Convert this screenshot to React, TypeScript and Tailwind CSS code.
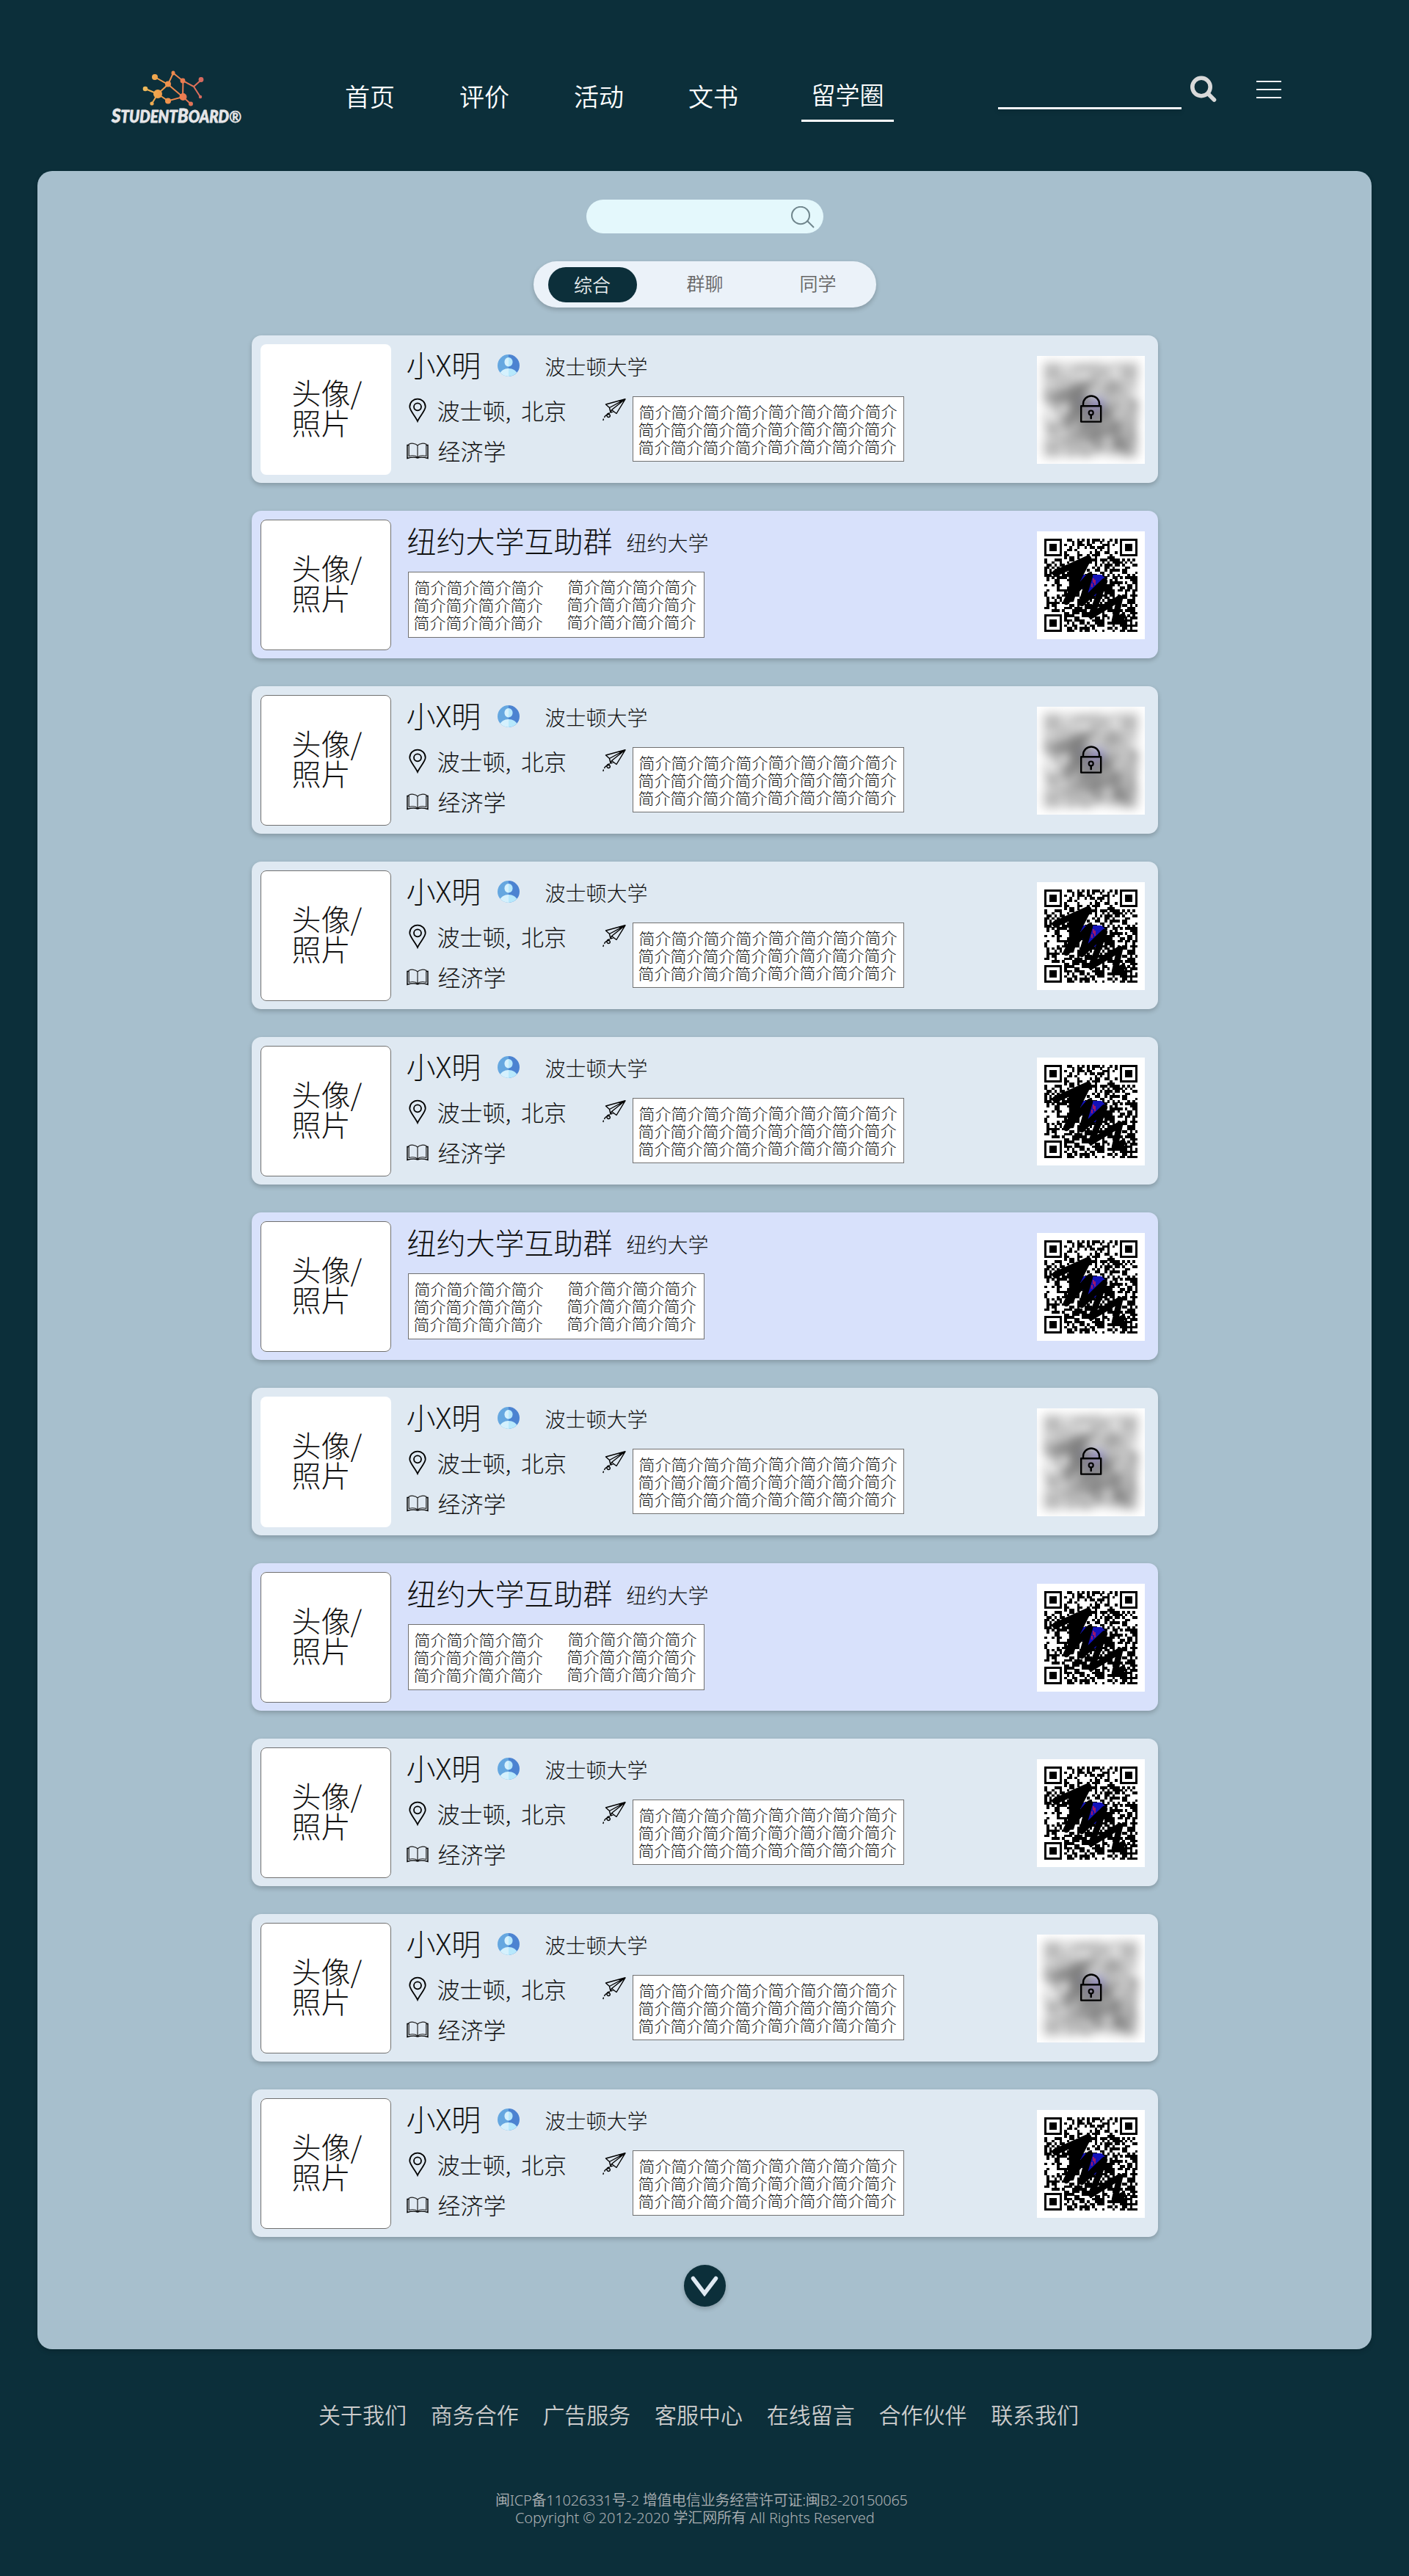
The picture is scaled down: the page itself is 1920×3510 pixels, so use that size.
import React from "react";

const INTRO = "简介简介简介简介";

/* ---------- QR code ---------- */

const SIZE = 37;

function isFinder(r: number, c: number) {
  const near = (r0: number, c0: number) => r >= r0 && r < r0 + 8 && c >= c0 && c < c0 + 8;
  return near(0, 0) || near(0, SIZE - 8) || near(SIZE - 8, 0);
}

function buildModules() {
  let seed = 20150065;
  let d = "";
  for (let r = 0; r < SIZE; r++) {
    for (let c = 0; c < SIZE; c++) {
      seed = (seed * 1103515245 + 12345) % 2147483648;
      if (isFinder(r, c)) continue;
      if ((seed >> 12) % 100 < 50) d += `M${c} ${r}h1.03v1.03h-1.03z`;
    }
  }
  for (const [x, y] of [
    [0, 0],
    [SIZE - 7, 0],
    [0, SIZE - 7],
  ]) {
    d += `M${x} ${y}h7v7h-7zM${x + 1} ${y + 1}v5h5v-5zM${x + 2} ${y + 2}h3v3h-3z`;
  }
  return d;
}

const MODULES = buildModules();

function QrDrawing() {
  return (
    <svg viewBox="0 0 147 147" className="block size-[147px]">
      <g transform="translate(10 10) scale(3.4324)">
        <path d={MODULES} fill="#000" shapeRendering="crispEdges" />
      </g>
      <path d="M57 59H88L95 66L87 88L74 88L62 78z" fill="#1212b8" />
      <path
        d="M25 57L70 37L40 96L72 60L61 98L92 68L74 115L113 91L106 122L117 116"
        fill="none"
        stroke="#000"
        strokeWidth="8.5"
        strokeLinecap="round"
        strokeLinejoin="round"
      />
      <path d="M43 50L64 42L60 60L50 96L38 97L44 78z" fill="#000" />
      <path d="M77 64V70M75 71V76M79 66V73" stroke="#c01a58" strokeWidth="1.6" />
    </svg>
  );
}

function Qr({ locked }: { locked: boolean }) {
  return (
    <div className="relative mt-7 size-[147px] shrink-0 overflow-hidden bg-white">
      {locked ? (
        <>
          <div className="opacity-50 blur-[7px]">
            <QrDrawing />
          </div>
          <svg viewBox="0 0 30 38" className="absolute left-[59px] top-[53px] h-[38px] w-[30px]" fill="none" stroke="#000">
            <path d="M4 15V12.5a11 11 0 0 1 22 0V15" strokeWidth="2.4" />
            <rect x="1.2" y="15.2" width="27" height="21.4" strokeWidth="2.4" strokeLinejoin="round" />
            <circle cx="14.7" cy="24.5" r="3" strokeWidth="2.2" />
            <path d="M14.7 27.5V32" strokeWidth="2.6" strokeLinecap="round" />
          </svg>
        </>
      ) : (
        <QrDrawing />
      )}
    </div>
  );
}

/* ---------- icons ---------- */

function Logo() {
  return (
    <svg viewBox="0 0 190 84" className="h-[84px] w-[190px]">
      <defs>
        <linearGradient id="warm" gradientUnits="userSpaceOnUse" x1="46" y1="0" x2="126" y2="0">
          <stop offset="0" stopColor="#edbb5c" />
          <stop offset="0.25" stopColor="#f0a04a" />
          <stop offset="0.65" stopColor="#ec7d50" />
          <stop offset="1" stopColor="#d4685f" />
        </linearGradient>
      </defs>
      <g fill="none" stroke="url(#warm)" strokeWidth="2">
        <path d="M61 11L79 21L86 5.500L99 16L114 24L124 15M114 24L123 38M79 21L65 34L48 27M65 34L57 47M65 34L79 43.500L99 38L110 47.500M79 21L99 38L99.500 16" />
      </g>
      <g fill="url(#warm)">
        <ellipse cx="61" cy="11" rx="4" ry="4" />
        <ellipse cx="86" cy="5.500" rx="2.500" ry="3" />
        <circle cx="99" cy="16" r="3.400" />
        <circle cx="124" cy="14.500" r="3.400" />
        <circle cx="79" cy="20.500" r="4" />
        <circle cx="48" cy="27" r="3.300" />
        <circle cx="65" cy="34" r="6" />
        <circle cx="79" cy="43.500" r="4" />
        <circle cx="99.500" cy="38" r="5" />
        <circle cx="110" cy="47.500" r="3" />
        <circle cx="57" cy="47" r="2.600" />
        <circle cx="123" cy="38" r="2.200" />
      </g>
      <text
        x="2"
        y="73"
        textLength="177"
        lengthAdjust="spacingAndGlyphs"
        fill="#e6e6e8"
        stroke="#e6e6e8"
        strokeWidth="0.8"
        strokeLinejoin="round"
        fontFamily='"Lato", sans-serif'
        fontWeight="900"
        fontStyle="italic"
        fontSize="22"
      >
        <tspan fontSize="26">S</tspan>TUDENT<tspan fontSize="26">B</tspan>OARD<tspan fontWeight="400">®</tspan>
      </text>
    </svg>
  );
}

function UserIcon() {
  return (
    <svg viewBox="0 0 30 30" className="size-[30px] shrink-0">
      <defs>
        <clipPath id="disc">
          <circle cx="15" cy="15" r="15" />
        </clipPath>
      </defs>
      <g clipPath="url(#disc)">
        <path d="M0 0H15V30H0z" fill="#65a7e0" />
        <path d="M15 0H30V30H15z" fill="#4c83d1" />
        <path d="M15 19C9 19 5 22 3 26V30H15z" fill="#d5f1fd" />
        <path d="M15 19C21 19 25 22 27 26V30H15z" fill="#b7e8fc" />
        <path d="M15 4A5.500 6.200 0 0 0 15 16.500z" fill="#d5f1fd" />
        <path d="M15 4A5.500 6.200 0 0 1 15 16.500z" fill="#b7e8fc" />
      </g>
    </svg>
  );
}

function PinIcon() {
  return (
    <svg viewBox="0 0 24 34" className="ml-[4px] h-[34px] w-6 shrink-0" fill="none" stroke="#000" strokeWidth="1.8">
      <path d="M12 32C9 25 1.300 17.500 1.300 12.300a10.700 10.700 0 0 1 21.400 0C22.700 17.500 15 25 12 32z" />
      <circle cx="12" cy="12.300" r="5" />
    </svg>
  );
}

function BookIcon() {
  return (
    <svg viewBox="0 0 30 23" className="ml-px h-[23px] w-[30px] shrink-0" fill="none" stroke="#222" strokeWidth="1.2">
      <path d="M15 4C12 .8 6.500 .6 3.200 2.200V18.500C7 17.500 12 17.500 15 20C18 17.500 23 17.500 26.800 18.500V2.200C23.500 .6 18 .8 15 4zV20" />
      <path d="M3 3.500H1V21.500C6 20 12 20 15 21C18 20 24 20 29 21.500V3.500H27" stroke="#000" strokeWidth="1.4" />
    </svg>
  );
}

function PlaneIcon() {
  return (
    <svg
      viewBox="0 0 32 31"
      className="mt-[86px] h-[31px] w-8 shrink-0"
      fill="none"
      stroke="#000"
      strokeWidth="1.400"
      strokeLinejoin="round"
    >
      <path d="M31 .8L4.500 8L9.500 12.500L31 .8L19 20.500L12.500 15.500L31 .8M9.500 12.500L11 19L12.500 15.500M11 19L15 17.500" />
      <path d="M10 20C5 20 5 25 8 25.500C11 25.500 11 21.500 8.500 21.500C5.500 21.500 3 24 2.500 26M1.500 27.500L.8 30" />
    </svg>
  );
}

function ThinSearch() {
  return (
    <svg viewBox="0 0 32 30" className="h-[30px] w-8" fill="none" stroke="#6f858c" strokeWidth="2">
      <ellipse cx="13" cy="12.500" rx="12" ry="11.700" />
      <path d="M22 20L31 29" />
    </svg>
  );
}

/* ---------- cards ---------- */

function Avatar({ bordered }: { bordered: boolean }) {
  return (
    <div
      className={
        "mt-3 ml-3 size-[178px] shrink-0 rounded-lg bg-white pt-[45px] pl-[43px] text-[40px] leading-[41px] text-[#111] " +
        (bordered ? "outline outline-1 -outline-offset-1 outline-[#707070]" : "")
      }
    >
      头像/
      <br />
      照片
    </div>
  );
}

function IntroColumn({ raised }: { raised?: boolean }) {
  return (
    <div className={"w-[176px] shrink-0 whitespace-nowrap text-[22px] leading-6 text-[#111] " + (raised ? "-mt-px" : "")}>
      <p className="pl-px">{INTRO}</p>
      <p>{INTRO}</p>
      <p>{INTRO}</p>
    </div>
  );
}

function PersonCard({ locked, bordered }: { locked: boolean; bordered: boolean }) {
  return (
    <article className="flex h-[201px] rounded-[13px] bg-[#dfe9f2] shadow-[0_3px_6px_rgba(0,0,0,0.2)]">
      <Avatar bordered={bordered} />
      <div className="ml-[20px] w-[268px] shrink-0 whitespace-nowrap text-[#111]">
        <div className="flex h-[81px] items-center">
          <span className="-mt-[3px] w-[125px] shrink-0 pl-px text-[40px] leading-none">小X明</span>
          <UserIcon />
          <span className="ml-[35px] mt-[3px] text-[28px] leading-none">波士顿大学</span>
        </div>
        <div className="flex h-[41px] items-center">
          <PinIcon />
          <span className="-mt-px ml-[15px] text-[31px] leading-none [word-spacing:7px]">波士顿, 北京</span>
        </div>
        <div className="flex h-[70px] items-center">
          <BookIcon />
          <span className="-mt-px ml-[13px] text-[31px] leading-none">经济学</span>
        </div>
      </div>
      <PlaneIcon />
      <div className="mt-[83px] ml-[9px] flex h-[89px] w-[370px] shrink-0 border border-[#707070] bg-white pt-[7px] pl-[7px]">
        <IntroColumn />
        <IntroColumn raised />
      </div>
      <div className="ml-auto mr-[18px]">
        <Qr locked={locked} />
      </div>
    </article>
  );
}

function GroupCard() {
  return (
    <article className="flex h-[201px] rounded-[13px] bg-[#d8e1fb] shadow-[0_3px_6px_rgba(0,0,0,0.2)]">
      <Avatar bordered />
      <div className="ml-[22px] whitespace-nowrap text-[#111]">
        <div className="flex h-[83px] items-center pb-1">
          <span className="text-[40px] leading-none">纽约大学互助群</span>
          <span className="ml-[19px] mt-[6px] text-[28px] leading-none">纽约大学</span>
        </div>
        <div className="ml-px flex h-[90px] w-[404px] justify-between border border-[#707070] bg-white pt-[7px] pr-[10px] pl-[7px]">
          <IntroColumn />
          <IntroColumn raised />
        </div>
      </div>
      <div className="ml-auto mr-[18px]">
        <Qr locked={false} />
      </div>
    </article>
  );
}

type Item = { kind: "person"; locked: boolean; bordered: boolean } | { kind: "group" };

const ITEMS: Item[] = [
  { kind: "person", locked: true, bordered: false },
  { kind: "group" },
  { kind: "person", locked: true, bordered: true },
  { kind: "person", locked: false, bordered: true },
  { kind: "person", locked: false, bordered: true },
  { kind: "group" },
  { kind: "person", locked: true, bordered: false },
  { kind: "group" },
  { kind: "person", locked: false, bordered: true },
  { kind: "person", locked: true, bordered: true },
  { kind: "person", locked: false, bordered: true },
];

const FOOTER_LINKS = ["关于我们", "商务合作", "广告服务", "客服中心", "在线留言", "合作伙伴", "联系我们"];

export default function App() {
  return (
    <div className='flex h-[3510px] w-[1920px] flex-col bg-[#0c2f3a] font-["Noto_Sans_CJK_SC",sans-serif] font-[350]'>
      <header className="flex h-[233px] shrink-0 items-start pl-[150px] text-white">
        <div className="mt-[94px]">
          <Logo />
        </div>
        <nav className="ml-[130px] mt-[113px] flex text-[34px] leading-[34px]">
          <a className="mt-px w-[156px]">首页</a>
          <a className="mt-px w-[156px]">评价</a>
          <a className="mt-px w-[156px]">活动</a>
          <a className="mt-px w-[154px]">文书</a>
          <a className="-mt-[2px] flex h-[55px] w-[126px] justify-center border-b-3 border-white text-[33px]">留学圈</a>
        </nav>
        <div className="ml-[142px] mt-[146px] h-[3px] w-[250px] bg-[#f5f5f8] shadow-[0_3px_6px_rgba(0,0,0,0.16)]" />
        <svg viewBox="0 0 38 37" className="ml-[11px] mt-[103px] h-[37px] w-[38px]" fill="none" stroke="#d9d9d9">
          <circle cx="16" cy="15.500" r="12.200" strokeWidth="5.600" />
          <path d="M25.500 25L33.500 33" strokeWidth="5.600" strokeLinecap="round" />
        </svg>
        <div className="ml-[53px] mt-[110px] flex w-[34px] flex-col gap-[9px]">
          <i className="h-[2px] bg-[#eef0f4]" />
          <i className="h-[2px] bg-[#eef0f4]" />
          <i className="h-[2px] bg-[#eef0f4]" />
        </div>
      </header>

      <main className="mx-[51px] flex h-[2968px] shrink-0 flex-col items-center rounded-[20px] bg-[#a7bfcd] pt-[39px] shadow-[0_3px_6px_rgba(0,0,0,0.16)]">
        <div className="flex h-[46px] w-[323px] items-start justify-end rounded-full bg-[#e4f8fc] pt-[9px] pr-[12px]">
          <ThinSearch />
        </div>

        <div className="mt-[38px] flex h-[63px] w-[467px] items-start rounded-full bg-[#ebf2f9] pt-2 pl-5 text-[25px] leading-[47px] text-[#666] shadow-[0_3px_6px_rgba(0,0,0,0.2)]">
          <div className="h-[48px] w-[121px] rounded-full bg-[#0c2f3a] text-center text-[#e8eef0]">综合</div>
          <div className="ml-[68px] -mt-[2px]">群聊</div>
          <div className="ml-[104px] -mt-[2px]">同学</div>
        </div>

        <section className="mt-[38px] flex w-[1235px] flex-col gap-[38px] font-light">
          {ITEMS.map((item, i) =>
            item.kind === "group" ? (
              <GroupCard key={i} />
            ) : (
              <PersonCard key={i} locked={item.locked} bordered={item.bordered} />
            ),
          )}
        </section>

        <button className="mt-[38px] flex size-[57px] items-center justify-center rounded-full bg-[#0c2f3a] shadow-[0_3px_6px_rgba(0,0,0,0.2)]">
          <svg viewBox="0 0 38 28" className="h-7 w-[38px]" fill="none" stroke="#dfe9f2" strokeWidth="5.500" strokeLinecap="round">
            <path d="M3.500 3.500L19 24L34.500 3.500" />
          </svg>
        </button>
      </main>

      <footer className="flex flex-col items-center whitespace-nowrap">
        <div className="mt-[73px] flex w-full gap-[32.700px] pl-[434px] text-[30px] leading-[30px] text-[#ccc]">
          {FOOTER_LINKS.map((t) => (
            <a key={t}>{t}</a>
          ))}
        </div>
        <div className='mt-[91px] w-full font-["Noto_Sans","Noto_Sans_CJK_SC",sans-serif] text-[20px] leading-6 text-[#adb1b4]'>
          <p className="pl-[675px] tracking-[-0.24px]">闽ICP备11026331号-2 增值电信业务经营许可证:闽B2-20150065</p>
          <p className="pl-[702px] tracking-[-0.14px]">Copyright © 2012-2020 学汇网所有 All Rights Reserved</p>
        </div>
      </footer>
    </div>
  );
}
